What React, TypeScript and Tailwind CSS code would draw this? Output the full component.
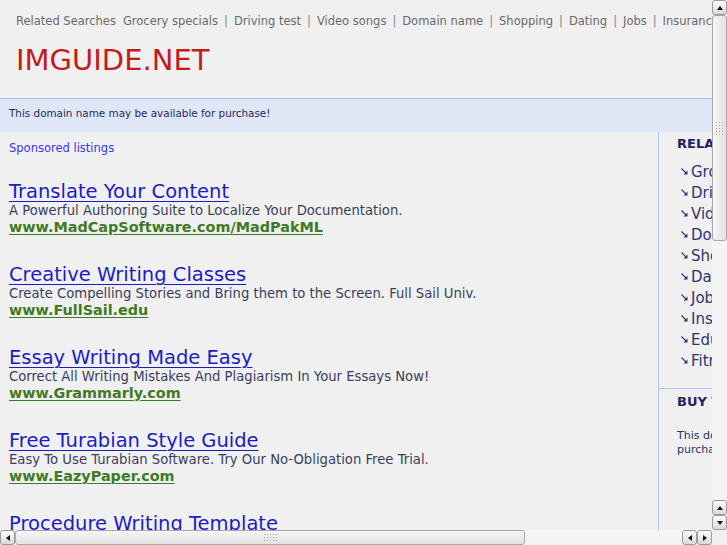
import React from 'react'

const navLinks = ['Grocery specials', 'Driving test', 'Video songs', 'Domain name', 'Shopping', 'Dating', 'Jobs', 'Insurance', 'Education', 'Fitness']

const ads = [
    { title: 'Translate Your Content', desc: 'A Powerful Authoring Suite to Localize Your Documentation.', url: 'www.MadCapSoftware.com/MadPakML' },
    { title: 'Creative Writing Classes', desc: 'Create Compelling Stories and Bring them to the Screen. Full Sail Univ.', url: 'www.FullSail.edu' },
    { title: 'Essay Writing Made Easy', desc: 'Correct All Writing Mistakes And Plagiarism In Your Essays Now!', url: 'www.Grammarly.com' },
    { title: 'Free Turabian Style Guide', desc: 'Easy To Use Turabian Software. Try Our No-Obligation Free Trial.', url: 'www.EazyPaper.com' },
    { title: 'Procedure Writing Template', desc: 'Write Procedures Faster And Easier. Free Download.', url: 'www.ProcedureWriting.com' },
]

function Arrow({ dir }: { dir: 'up' | 'down' | 'left' | 'right' }) {
    const pts = {
        up: '1,5 7,5 4,1',
        down: '1,1 7,1 4,5',
        left: '5,1 5,7 1,4',
        right: '1,1 1,7 5,4',
    }[dir]
    const w = dir === 'up' || dir === 'down' ? 8 : 6
    const h = dir === 'up' || dir === 'down' ? 6 : 8
    return (
        <svg width={w} height={h} viewBox={`0 0 ${w} ${h}`}>
            <polygon points={pts} fill="#111" />
        </svg>
    )
}

function ScrollButton({ dir }: { dir: 'up' | 'down' | 'left' | 'right' }) {
    return (
        <div className="w-[15px] h-[15px] shrink-0 rounded-[3px] border border-[#9a9a9a] bg-gradient-to-b from-[#fbfbfb] to-[#dadada] flex items-center justify-center">
            <Arrow dir={dir} />
        </div>
    )
}

function Grip({ vertical }: { vertical: boolean }) {
    const dots = Array.from({ length: 15 })
    return (
        <div className={vertical ? 'grid grid-cols-3 gap-[2px]' : 'grid grid-rows-3 grid-flow-col gap-[2px]'}>
            {dots.map((_, i) => (
                <div key={i} className="w-[1px] h-[1px] bg-[#a0a0a0]" />
            ))}
        </div>
    )
}

function Track({ className }: { className: string }) {
    return <div className={`${className} bg-[#f4f4f4] bg-[radial-gradient(#dcdcdc_0.5px,transparent_0.6px)] bg-[length:2px_2px]`} />
}

function VerticalScrollbar() {
    return (
        <div className="w-[15px] h-[530px] flex flex-col bg-[#f2f2f2]">
            <ScrollButton dir="up" />
            <div className="h-[226px] shrink-0 rounded-[3px] border border-[#a8a8a8] bg-gradient-to-r from-[#f6f6f6] to-[#e2e2e2] flex items-center justify-center">
                <Grip vertical />
            </div>
            <Track className="flex-1" />
            <ScrollButton dir="up" />
            <ScrollButton dir="down" />
        </div>
    )
}

function HorizontalScrollbar() {
    return (
        <div className="w-[712px] h-[15px] flex bg-[#f2f2f2]">
            <ScrollButton dir="left" />
            <div className="w-[510px] shrink-0 rounded-[3px] border border-[#a8a8a8] bg-gradient-to-b from-[#f6f6f6] to-[#e2e2e2] flex items-center justify-center">
                <Grip vertical={false} />
            </div>
            <Track className="flex-1" />
            <ScrollButton dir="left" />
            <ScrollButton dir="right" />
        </div>
    )
}

function BulletIcon() {
    return (
        <svg width="7" height="7" viewBox="0 0 7 7" className="mr-[3px] -mt-[3px]">
            <path d="M0.5 0.5 L5 5" stroke="#2e3570" strokeWidth="1.1" />
            <path d="M6.5 2.5 L6.5 6.5 L2.5 6.5 Z" fill="#2e3570" />
        </svg>
    )
}

function Page() {
    return (
        <div className="w-[960px] min-h-[700px] bg-[#f0f0f0] font-['DejaVu_Sans',sans-serif]">
            {/* Top related searches */}
            <div className="pt-[13px] pl-[16px] text-[11.5px] leading-[16px] text-[#6a6a6a] whitespace-nowrap">
                <span>Related Searches</span>
                <span className="ml-[7px]">
                    {navLinks.map((l, i) => (
                        <span key={l}>
                            {i > 0 && <span className="mx-[6px] text-[#888]">|</span>}
                            <span>{l}</span>
                        </span>
                    ))}
                </span>
            </div>

            {/* Logo */}
            <div className="pl-[16px] pt-[11px] h-[69px] text-[29px] leading-[40px] text-[#c41b1b]">IMGUIDE.NET</div>

            {/* Purchase bar */}
            <div className="h-[34px] border-t border-[#a9bde8] bg-[#dfe6f6] flex items-center pl-[9px] pb-[4px] text-[10.4px] text-[#242a66]">
                This domain name may be available for purchase!
            </div>

            <div className="flex">
                {/* Listings */}
                <div className="w-[659px] shrink-0 border-r border-[#b4c7ea] pl-[9px] pt-[8px] min-h-[420px]">
                    <div className="text-[11.5px] leading-[16px] text-[#3737ee]">Sponsored listings</div>
                    <div className="mt-[26px] flex flex-col gap-[29px]">
                        {ads.map(ad => (
                            <div key={ad.title} className="flex flex-col">
                                <a className="text-[19.5px] leading-[20px] text-[#1c1cc6] underline underline-offset-[3px] decoration-1 w-fit">{ad.title}</a>
                                <div className="text-[13.2px] leading-[17px] text-[#3a3e5e]">{ad.desc}</div>
                                <a className="text-[14.4px] leading-[17px] font-bold text-[#407a24] underline underline-offset-[2px] decoration-1 w-fit">{ad.url}</a>
                            </div>
                        ))}
                    </div>
                </div>

                {/* Sidebar */}
                <div className="flex-1 text-[#2e3570]">
                    <div className="pl-[18px] pt-[4px] pb-[16px] border-b border-[#b4c7ea]">
                        <div className="text-[13px] leading-[16px] font-bold text-[#1f2262] whitespace-nowrap">RELATED SEARCHES</div>
                        <div className="mt-[10px] pl-[4px] flex flex-col">
                            {navLinks.map(l => (
                                <div key={l} className="flex items-center h-[21px] text-[15px] whitespace-nowrap">
                                    <BulletIcon />
                                    <span>{l}</span>
                                </div>
                            ))}
                        </div>
                    </div>
                    <div className="pl-[18px] pt-[5px]">
                        <div className="text-[13px] leading-[16px] font-bold text-[#1f2262] whitespace-nowrap">BUY THIS DOMAIN</div>
                        <div className="mt-[19px] text-[11px] leading-[14px] text-[#2a3068] w-[220px]">
                            This domain name may be available for purchase.
                        </div>
                    </div>
                </div>
            </div>
        </div>
    )
}

export default function App() {
    return (
        <div className="w-[727px] h-[545px] flex flex-col overflow-hidden bg-[#f0f0f0]">
            <div className="flex h-[530px]">
                <div className="w-[712px] h-[530px] overflow-hidden">
                    <Page />
                </div>
                <VerticalScrollbar />
            </div>
            <div className="flex h-[15px]">
                <HorizontalScrollbar />
                <div className="w-[15px] h-[15px] bg-[#f0f0f0]" />
            </div>
        </div>
    )
}
